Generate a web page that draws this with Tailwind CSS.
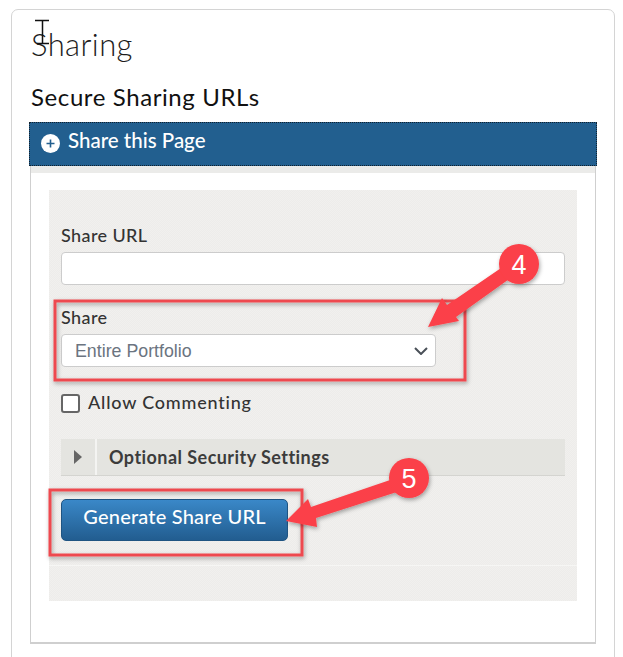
<!DOCTYPE html>
<html lang="en">
<head>
<meta charset="UTF-8">
<title>Sharing</title>
<script src="https://cdn.jsdelivr.net/npm/@tailwindcss/browser@4"></script>
</head>
<body class="relative w-[623px] h-[657px] overflow-hidden bg-white font-['Lato','Open_Sans',sans-serif] text-[#222]">
  <div class="mt-[9px] ml-[11px] w-[604px] h-[680px] rounded-t-[7px] border border-[#d4d4d4] pl-[17px]">
    <h1 class="ml-[2px] mt-[15px] h-[38px] text-[31px] leading-[38px] font-light tracking-[0.4px] text-[#1c1c1c]">Sharing</h1>
    <h2 class="ml-[2px] mt-[19px] h-[30px] text-[24px] leading-[30px] font-normal tracking-[0.6px] text-[#111]">Secure Sharing URLs</h2>
    <section class="mt-[10px] w-[568px]">
      <div class="flex items-center gap-[8px] h-[44px] pl-[11px] pb-[4px] bg-[#225f8f] border border-dotted border-[#10212e] text-white text-[20.5px] font-medium">
        <span class="flex items-center justify-center w-[19px] h-[19px] mt-[2px] rounded-full bg-white">
          <svg width="9" height="9" viewBox="0 0 9 9"><path d="M4.5 0.5v8M0.5 4.5h8" stroke="#225f8f" stroke-width="1.6"/></svg>
        </span>
        <span class="mb-[4px]">Share this Page</span>
      </div>
      <div class="ml-[1px] w-[566px] h-[478px] border-x border-b-2 border-[#cfcfcf]">
        <div class="h-[7px] bg-[#ebebe9]"></div>
        <div class="mt-[17px] ml-[18px] w-[528px] h-[411px] px-[12px] pt-[35px] bg-[repeating-conic-gradient(#f1f0ee_0_25%,#edecea_0_50%)] bg-[length:2px_2px]">
          <label class="block h-[21px] text-[18px] leading-[21px] font-medium tracking-[0.4px] text-[#333]">Share URL</label>
          <input type="text" class="block mt-[6px] w-[504px] h-[33px] rounded-[4px] border border-[#cccccc] bg-white">
          <label class="block mt-[22px] h-[21px] text-[18px] leading-[21px] font-medium tracking-[0.4px] text-[#333]">Share</label>
          <div class="flex items-center justify-between mt-[6px] w-[375px] h-[33px] pl-[13px] pr-[7px] pt-[1px] rounded-[4px] border border-[#cccccc] bg-white font-['Liberation_Sans',sans-serif] text-[17.8px] text-[#6b7480]">
            <span>Entire Portfolio</span>
            <svg width="14" height="8" viewBox="0 0 14 8"><path d="M1 1l6 6 6-6" fill="none" stroke="#4a5058" stroke-width="2"/></svg>
          </div>
          <div class="flex items-center gap-[8px] mt-[27px] h-[19px]">
            <span class="block w-[19px] h-[19px] rounded-[3px] border-2 border-[#666] bg-white"></span>
            <span class="mb-[2px] text-[18px] font-medium tracking-[0.8px] text-[#333]">Allow Commenting</span>
          </div>
          <div class="flex items-center mt-[26px] w-[504px] h-[37px] bg-[#e4e4e0] border-b border-[#d4d4d0]">
            <span class="flex items-center justify-center w-[36px] h-full border-r-2 border-[#f4f4f2]">
              <svg width="8" height="14" viewBox="0 0 8 14"><path d="M0 0l8 7-8 7z" fill="#666"/></svg>
            </span>
            <span class="ml-[12px] text-[18px] font-bold tracking-[0.45px] text-[#3c3c3c]">Optional Security Settings</span>
          </div>
          <button class="block mt-[23px] w-[227px] h-[42px] pb-[8px] rounded-[5px] border border-[#1f5482] bg-gradient-to-b from-[#3a88c8] to-[#225d90] text-white text-[20px] font-medium tracking-[0.2px]">Generate Share URL</button>
          <div class="mt-[24px] -mx-[12px] h-[1px] bg-[#f6f6f4]"></div>
        </div>
      </div>
    </section>
  </div>

  <!-- annotations drawn over the page -->
  <svg class="absolute left-0 top-0 pointer-events-none" width="623" height="657" viewBox="0 0 623 657">
    <defs>
      <filter id="sh" x="-20%" y="-20%" width="140%" height="140%"><feDropShadow dx="1" dy="2" stdDeviation="2" flood-color="#000" flood-opacity="0.35"/></filter>
    </defs>
    <rect x="55" y="301" width="410" height="79" fill="none" stroke="#ee4a50" stroke-width="3" filter="url(#sh)"/>
    <rect x="50" y="490" width="252" height="65" fill="none" stroke="#ee4a50" stroke-width="3" filter="url(#sh)"/>
    <g fill="#fb4048" filter="url(#sh)">
      <path d="M504 266L512 277L456 317L459 321L428 327L442 298L447 305z"/>
      <path d="M396 478L400 491L316 518L317 527L286 521L308 499L311 507z"/>
      <circle cx="519" cy="264" r="20"/>
      <circle cx="409" cy="478" r="20"/>
    </g>
    <text x="519" y="274" text-anchor="middle" fill="#fff" font-family="Liberation Sans, sans-serif" font-size="27">4</text>
    <text x="409" y="488" text-anchor="middle" fill="#fff" font-family="Liberation Sans, sans-serif" font-size="27">5</text>
    <path d="M35 20.500h14M37 43.500h12M42.500 20.500v23" fill="none" stroke="#111" stroke-width="1.500"/>
  </svg>
</body>
</html>
